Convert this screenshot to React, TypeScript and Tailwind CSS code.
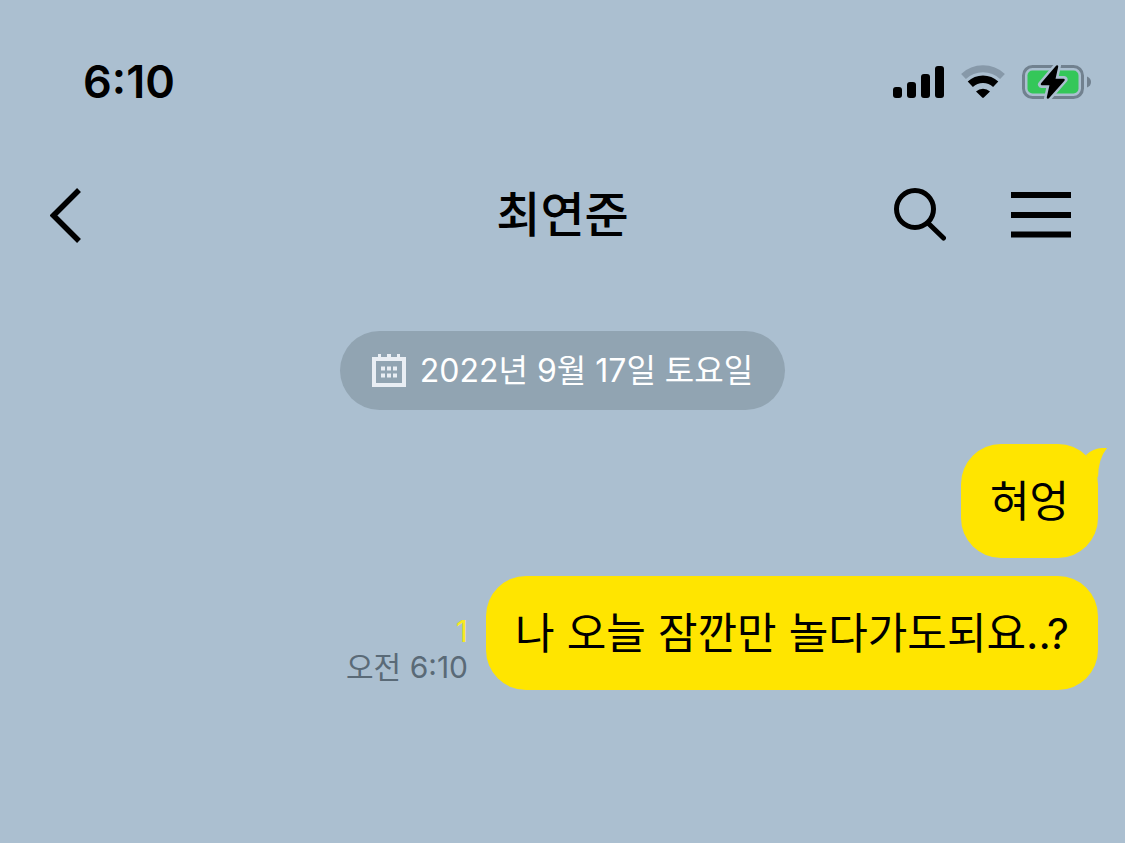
const messages = [
    { id: 1, text: '혀엉', first: true },
    { id: 2, text: '나 오늘 잠깐만 놀다가도되요..?', unread: 1, time: '오전 6:10' },
];

export default function App() {
    return (
        <div className="min-h-screen bg-[#abbfd0] pb-12 font-['Inter','Noto_Sans_CJK_KR',sans-serif] text-black">
            <StatusBar />
            <ChatHeader name="최연준" />
            <main className="flex flex-col pt-[65px]">
                <DateButton label="2022년 9월 17일 토요일" />
                <ul className="mt-[34px] flex flex-col gap-[18px] pr-[27px] pl-6">
                    {messages.map((message) => (
                        <MessageRow key={message.id} {...message} />
                    ))}
                </ul>
            </main>
        </div>
    );
}

function StatusBar() {
    return (
        <div className="flex h-[164px] items-center justify-between pr-[34px] pl-[83px]">
            <span className="text-[45px] leading-[56px] font-semibold [font-feature-settings:'case']">6:10</span>
            <div className="flex items-center gap-[17px]">
                <SignalIcon />
                <WifiIcon />
                <BatteryIcon />
            </div>
        </div>
    );
}

function SignalIcon() {
    return (
        <svg width="51" height="34" viewBox="0 0 51 34" fill="black" aria-hidden="true">
            <rect x="0" y="22" width="9" height="11" rx="3" />
            <rect x="14" y="17" width="9" height="16" rx="3" />
            <rect x="28" y="9" width="9" height="24" rx="3" />
            <rect x="42" y="1" width="9" height="32" rx="3" />
        </svg>
    );
}

function WifiIcon() {
    return (
        <svg width="44" height="34" viewBox="0 0 44 34" fill="none" aria-hidden="true">
            <path d="M2.5 11.5 A28.5 28.5 0 0 1 41.5 11.5" stroke="#8799a9" strokeWidth="7" />
            <path d="M9.3 19.3 A18.4 18.4 0 0 1 34.7 19.3" stroke="black" strokeWidth="7.5" />
            <path d="M15 26.5 A10.5 10.5 0 0 1 29 26.5 L22.8 32.6 Q22 33.4 21.2 32.6 Z" fill="black" />
        </svg>
    );
}

function BatteryIcon() {
    return (
        <svg width="69" height="34" viewBox="0 0 69 34" fill="none" aria-hidden="true">
            <rect x="1.5" y="1.5" width="59" height="31" rx="9" stroke="#71818f" strokeWidth="3" />
            <path d="M65 11.5 Q69 13 69 17 Q69 21 65 22.5 Z" fill="#71818f" />
            <rect x="5.5" y="5.5" width="51" height="23" rx="5" fill="#34c759" />
            <path
                d="M35.5 0.5 L19.5 19.5 H28.5 L25.5 33.5 L42 14.5 H32.5 Z"
                fill="#abbfd0"
                stroke="#abbfd0"
                strokeWidth="7"
                strokeLinejoin="round"
            />
            <path
                d="M35 1.5 L20 19 H29 L26 32.5 L41.5 15 H32 Z"
                fill="black"
                stroke="black"
                strokeWidth="2.5"
                strokeLinejoin="round"
            />
        </svg>
    );
}

function ChatHeader({ name }: { name: string }) {
    return (
        <header className="grid h-[102px] grid-cols-[1fr_auto_1fr] items-center px-[50px]">
            <button type="button" aria-label="뒤로" className="justify-self-start">
                <svg width="32" height="56" viewBox="0 0 32 56" fill="none" aria-hidden="true">
                    <path d="M29 3 L3.5 28.5 L29 54" stroke="black" strokeWidth="5.5" />
                </svg>
            </button>
            <h1 className="text-5xl font-medium">{name}</h1>
            <div className="mr-1 flex items-center gap-[65px] justify-self-end">
                <button type="button" aria-label="검색">
                    <svg width="52" height="54" viewBox="0 0 52 54" fill="none" stroke="black" strokeWidth="5" aria-hidden="true">
                        <circle cx="21" cy="21" r="18.5" />
                        <path d="M35 36 L49.5 50" strokeLinecap="round" />
                    </svg>
                </button>
                <button type="button" aria-label="메뉴">
                    <svg width="60" height="46" viewBox="0 0 60 46" fill="black" aria-hidden="true">
                        <rect y="0" width="60" height="6" />
                        <rect y="20" width="60" height="6" />
                        <rect y="39.5" width="60" height="6" />
                    </svg>
                </button>
            </div>
        </header>
    );
}

function DateButton({ label }: { label: string }) {
    return (
        <button
            type="button"
            className="flex h-[79px] items-center gap-3.5 self-center rounded-full bg-[#91a4b2] px-8 text-[32px] leading-[44px] text-white"
        >
            <svg width="34" height="34" viewBox="0 0 34 34" fill="#e9eef4" aria-hidden="true">
                <path d="M0 3 H34 V33 H0 Z M4 7 V29 H30 V7 Z" fillRule="evenodd" />
                <rect x="6" y="0" width="3" height="4" />
                <rect x="15" y="0" width="4" height="4" />
                <rect x="25" y="0" width="3" height="4" />
                <path d="M9 12.5h4v4h-4z M15 12.5h4v4h-4z M21 12.5h4v4h-4z M9 19.5h4v4h-4z M15 19.5h4v4h-4z M21 19.5h4v4h-4z" />
            </svg>
            {label}
        </button>
    );
}

interface MessageRowProps {
    text: string;
    first?: boolean;
    unread?: number;
    time?: string;
}

function MessageRow({ text, first, unread, time }: MessageRowProps) {
    return (
        <li className="flex items-end justify-end gap-[18px]">
            {time && (
                <div className="flex flex-col items-end pb-[5px] text-[30px] leading-9 [font-feature-settings:'case']">
                    <span className="text-[#f7e920]">{unread}</span>
                    <time className="text-[#5a6a77]">{time}</time>
                </div>
            )}
            <p className="relative rounded-[40px] bg-[#ffe500] px-[29px] py-[27px] text-[43px] leading-[60px]">
                {text}
                {first && (
                    <svg
                        className="absolute top-1 -right-[9px]"
                        width="26"
                        height="30"
                        viewBox="0 0 26 30"
                        fill="#ffe500"
                        aria-hidden="true"
                    >
                        <path d="M5 7 Q13 -1 26 0 Q17 11 17 30 Z" />
                    </svg>
                )}
            </p>
        </li>
    );
}
